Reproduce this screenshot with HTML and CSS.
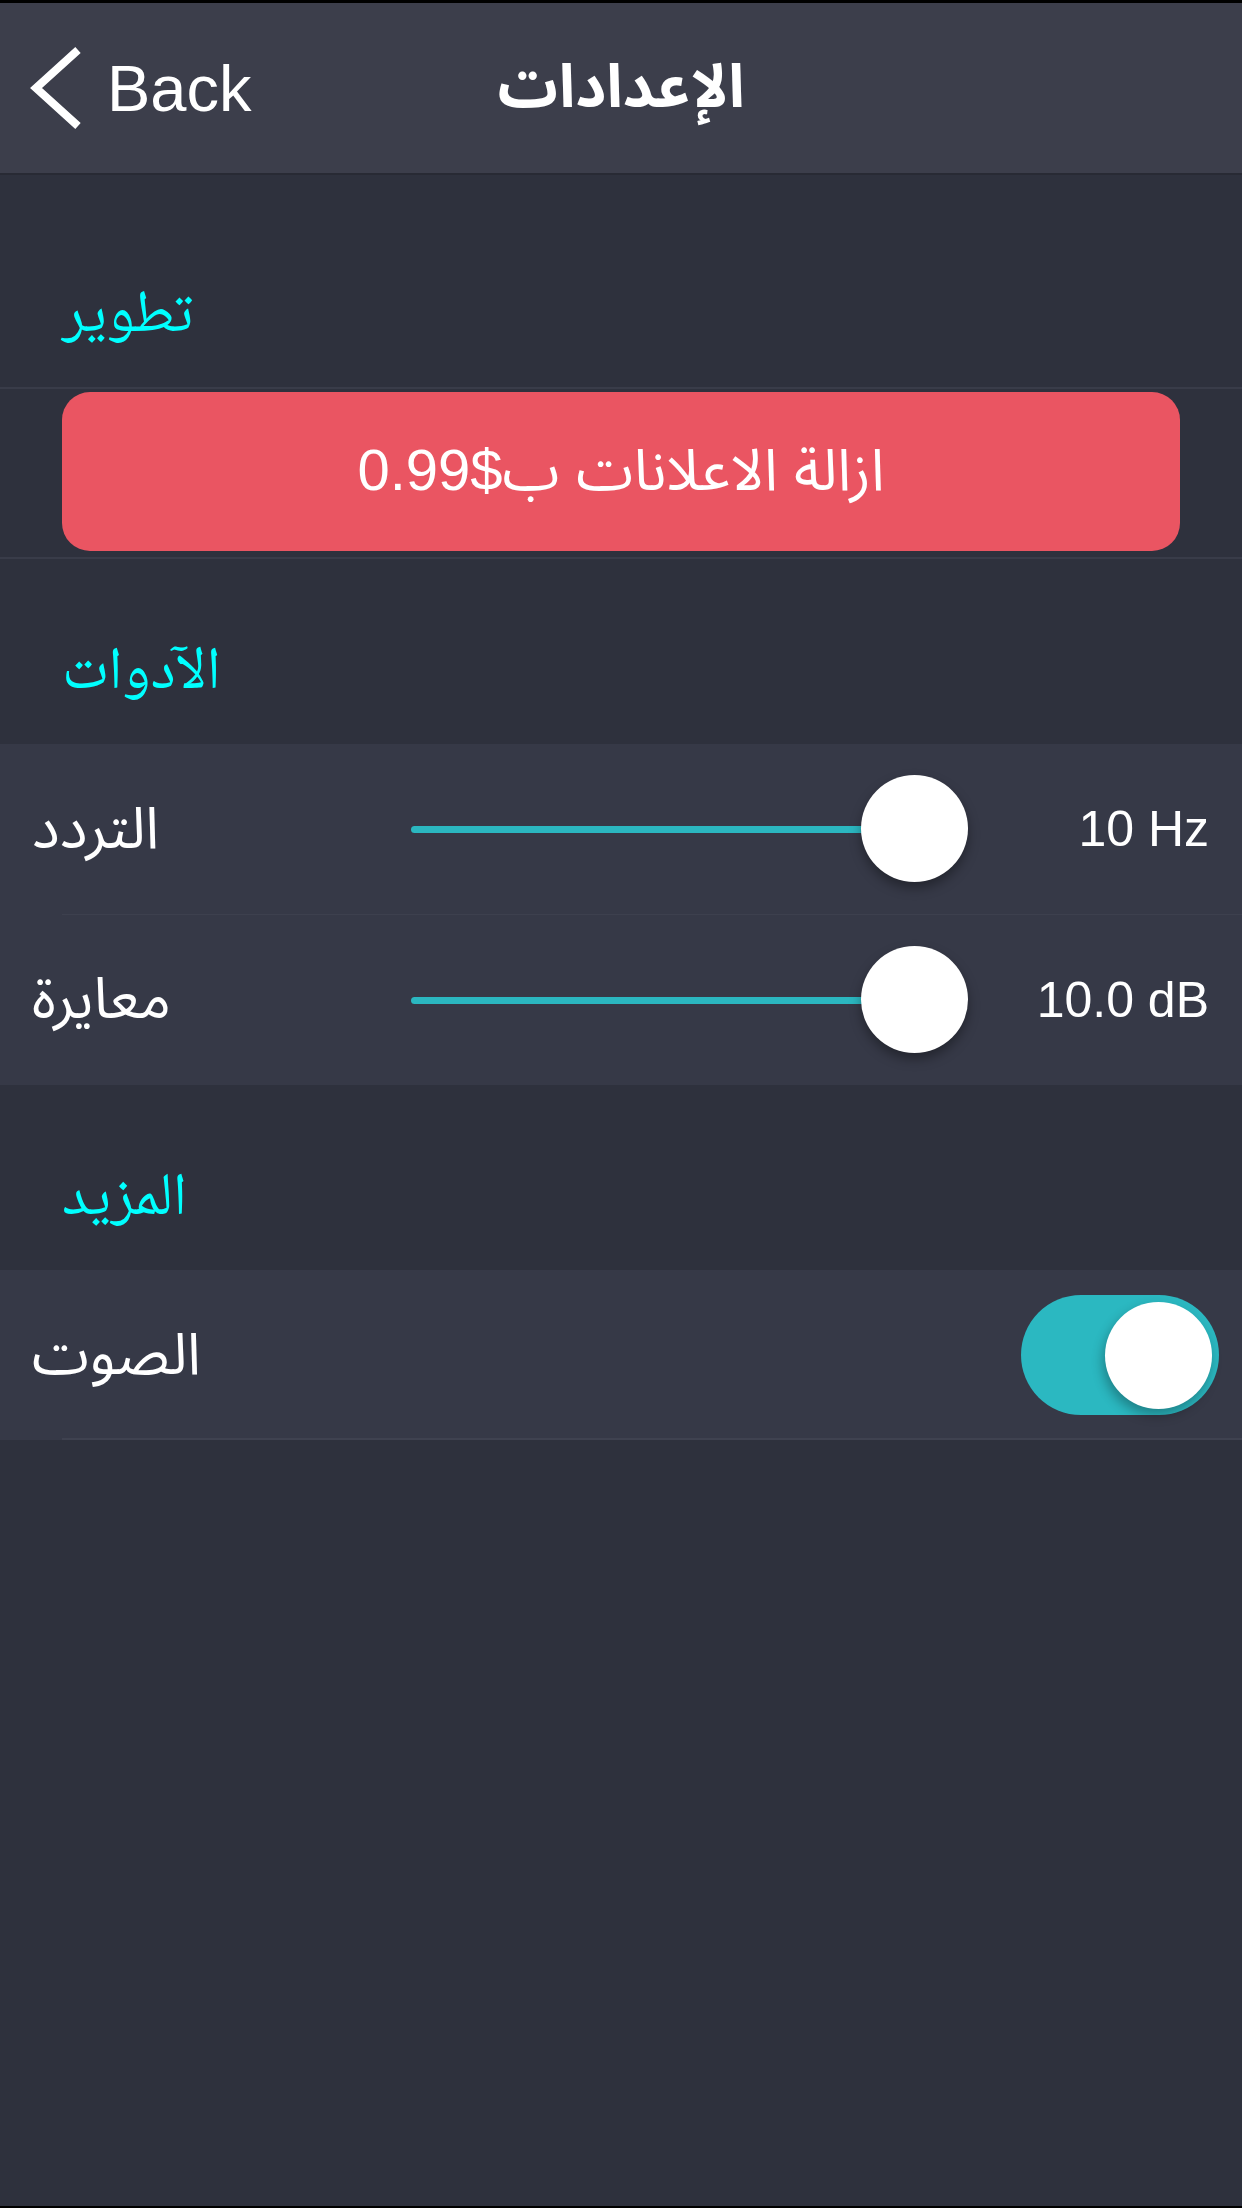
FILE: index.html
```html
<!DOCTYPE html>
<html lang="ar">
<head>
  <meta charset="UTF-8">
  <meta name="viewport" content="width=device-width, initial-scale=1.0">
  <title>الإعدادات</title>
  <link rel="stylesheet" href="styles.css">
</head>
<body>
  <div class="screen">
    <header class="navbar">
      <a class="back" href="#">
        <svg class="chevron" width="52" height="84" viewBox="0 0 52 84">
          <polyline points="48,4 6,42 48,80" fill="none" stroke="#fff" stroke-width="8"/>
        </svg>
        <span>Back</span>
      </a>
      <h1 class="title">الإعدادات</h1>
      <span></span>
    </header>

    <section class="group">
      <div class="group-title first">تطوير</div>
      <div class="group-body buy">
        <button class="buy-btn" dir="rtl">ازالة الاعلانات ب$0.99</button>
      </div>
    </section>

    <section class="group">
      <div class="group-title">الآدوات</div>
      <div class="group-body">
        <div class="row">
          <span class="label">التردد</span>
          <div class="slider">
            <div class="track"></div>
            <div class="thumb"></div>
          </div>
          <span class="value">10 Hz</span>
        </div>
        <div class="row">
          <span class="label">معايرة</span>
          <div class="slider">
            <div class="track"></div>
            <div class="thumb"></div>
          </div>
          <span class="value">10.0 dB</span>
        </div>
      </div>
    </section>

    <section class="group">
      <div class="group-title">المزيد</div>
      <div class="group-body">
        <div class="row last">
          <span class="label">الصوت</span>
          <div class="toggle on">
            <div class="knob"></div>
          </div>
        </div>
      </div>
    </section>
  </div>
</body>
</html>
```

FILE: styles.css
```css
body {
  margin: 0;
  background-color: #000;
  font-family: 'Liberation Sans', 'Noto Sans Arabic', 'DejaVu Sans', sans-serif;
  color: #fff;
}

.screen {
  height: 2203px;
  margin-top: 3px;
  background-color: #2e313d;
  overflow: hidden;
}

.navbar {
  height: 170px;
  display: grid;
  grid-template-columns: 1fr auto 1fr;
  align-items: center;
  background-color: #3c3e4b;
  border-bottom: 2px solid #282a34;
}

.back {
  display: flex;
  align-items: center;
  gap: 25px;
  padding-left: 30px;
  color: #fff;
  text-decoration: none;
  font-size: 65px;
}

.chevron {
  display: block;
}

.title {
  margin: 0;
  font-size: 60px;
  font-weight: bold;
  font-family: 'Noto Sans Arabic', 'DejaVu Sans', sans-serif;
}

.group-title {
  padding: 81px 62px 34px;
  line-height: 70px;
  font-size: 60px;
  color: #00ffff;
  font-family: 'Noto Naskh Arabic', 'Noto Sans Arabic', 'DejaVu Sans', serif;
}

.group-title.first {
  padding-top: 108px;
}

.group-body.buy {
  border-top: 2px solid #393c49;
  border-bottom: 2px solid #393c49;
  padding: 3px 62px 6px;
}

.buy-btn {
  display: block;
  width: 100%;
  height: 159px;
  border: none;
  border-radius: 28px;
  background-color: #ea5562;
  color: #fff;
  font-family: 'Liberation Sans', 'Noto Sans Arabic', 'DejaVu Sans', sans-serif;
  font-size: 58px;
  cursor: pointer;
}

.row {
  height: 170px;
  display: flex;
  align-items: center;
  padding: 0 33px 0 32px;
  background-color: #363947;
}

.row + .row {
  height: 171px;
  background: linear-gradient(#3d404e, #3d404e) 62px 0 / 100% 1px no-repeat, #363947;
}

.row.last {
  background: linear-gradient(#3f4250, #3f4250) 62px 100% / 100% 2px no-repeat, #363947;
}

.label {
  width: 379px;
  font-size: 58px;
  font-family: 'Noto Sans Arabic', 'DejaVu Sans', sans-serif;
}

.slider {
  position: relative;
  width: 557px;
  height: 108px;
}

.track {
  position: absolute;
  left: 0;
  top: 51px;
  width: 510px;
  height: 7px;
  border-radius: 4px;
  background-color: #2bb7c0;
}

.thumb {
  position: absolute;
  right: 0;
  top: 0;
  width: 107px;
  height: 107px;
  border-radius: 50%;
  background-color: #fff;
  box-shadow: 0 6px 12px rgba(0, 0, 0, 0.35);
}

.value {
  flex: 1;
  text-align: right;
  font-size: 50px;
}

.toggle {
  margin-left: auto;
  margin-right: -10px;
  width: 198px;
  height: 120px;
  border-radius: 60px;
  background-color: #2bb8c1;
  display: flex;
  align-items: center;
  justify-content: flex-end;
  padding: 0 7px;
  box-sizing: border-box;
}

.knob {
  width: 107px;
  height: 107px;
  border-radius: 50%;
  background-color: #fff;
  box-shadow: -2px 6px 12px rgba(0, 0, 0, 0.3);
}
```
